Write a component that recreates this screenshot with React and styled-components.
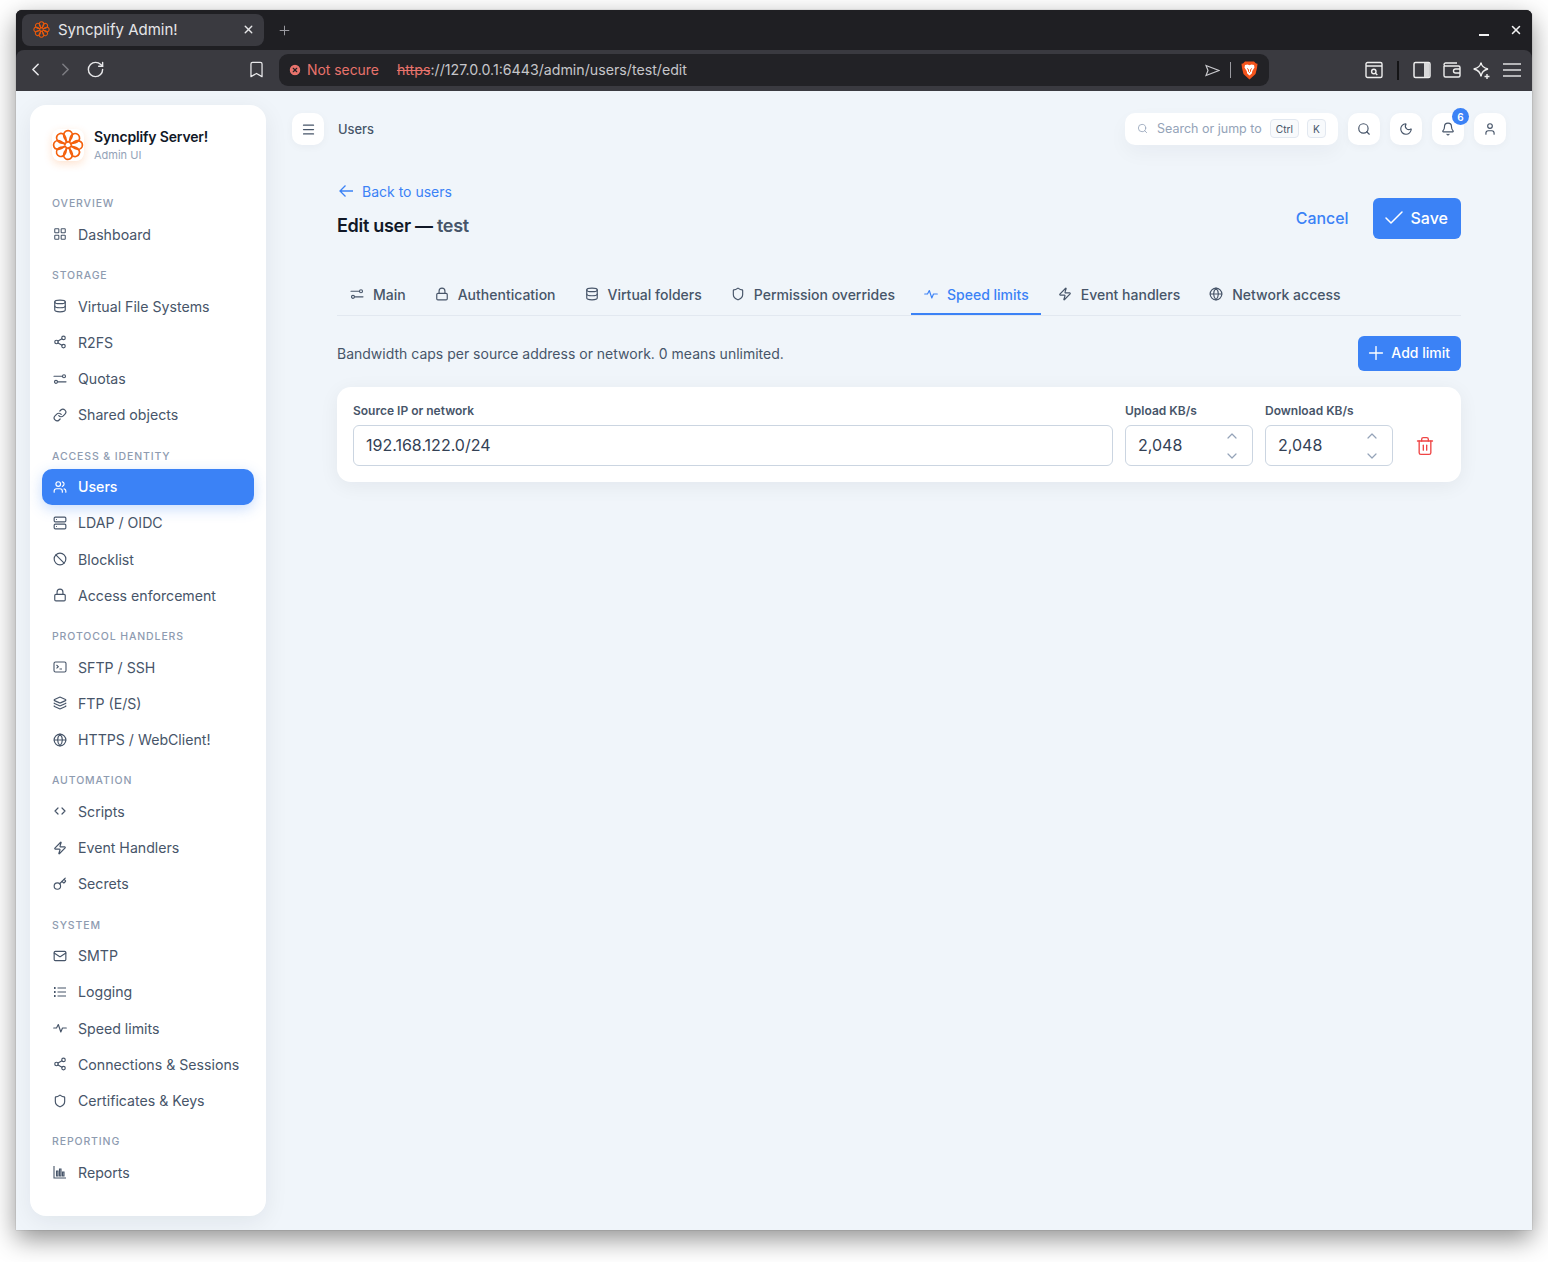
import React from "react";
import styled, { createGlobalStyle } from "styled-components";
import {
  LayoutGrid, Database, Share2, Link, Users, Server, Ban, Lock, Layers, Globe,
  Code, Zap, Key, Mail, Shield, Menu, Search, Moon, Bell, User,
  Check, Plus, ChevronUp, ChevronDown, Trash2, X, ChevronLeft, ChevronRight, RotateCw, Bookmark, CircleX,
} from "lucide-react";

const Global = createGlobalStyle`
  html, body { margin: 0; padding: 0; background: #fff; }
  body { font-family: Inter, "Liberation Sans", sans-serif; -webkit-font-smoothing: antialiased; }
  * { box-sizing: border-box; }
`;

const Page = styled.div`
  width: 1548px;
  height: 1262px;
  padding: 10px 16px 32px;
`;
const Window = styled.div`
  width: 1516px;
  height: 1220px;
  display: flex;
  flex-direction: column;
  border-radius: 6px 6px 0 0;
  overflow: hidden;
  background: #1f1f23;
  box-shadow: 0 9px 26px rgba(0, 0, 0, 0.44), 0 0 1px rgba(0, 0, 0, 0.6);
`;
const TabStrip = styled.div`
  height: 40px;
  flex: none;
  background: #1f1f23;
  display: flex;
  align-items: flex-start;
  padding: 4px 6px 0;
  color: #e8e8ea;
`;
const BrowserTab = styled.div`
  width: 242px;
  height: 32px;
  border-radius: 8px;
  background: #3a3a40;
  display: flex;
  align-items: center;
  padding: 0 9px 1px 11px;
  gap: 8px;
  font-size: 15px;
  color: #e6e6e8;
`;
const TabTitle = styled.span`flex: 1;`;
const NewTab = styled.div`
  margin-left: 13px;
  height: 32px;
  display: flex;
  align-items: center;
  color: #9a9aa0;
`;
const WindowControls = styled.div`
  margin-left: auto;
  height: 32px;
  display: flex;
  align-items: center;
  gap: 20px;
  padding-right: 3px;
  color: #f1f1f3;
`;
const MinimizeBar = styled.span`
  display: block;
  width: 10px;
  height: 2px;
  margin-top: 9px;
  background: #f1f1f3;
`;
const Toolbar = styled.div`
  height: 41px;
  flex: none;
  background: #3a3a40;
  border-radius: 8px 8px 0 0;
  display: flex;
  align-items: center;
  padding: 0 11px 1px 11px;
  color: #e8e8ea;
`;
const NavIcons = styled.div`
  width: 252px;
  display: flex;
  align-items: center;
  gap: 9px;
  margin-left: -2px;
  margin-right: 2px;
  padding-bottom: 1px;
  svg:nth-child(2) { color: #7c7c82; }
  svg:nth-child(3) { margin-left: 1px; }
  svg:nth-child(4) { margin-left: auto; margin-right: 11px; }
`;
const AddressBar = styled.div`
  width: 990px;
  height: 32px;
  border-radius: 9px;
  background: #222226;
  display: flex;
  align-items: center;
  padding: 0 11px 0 9px;
  font-size: 14.2px;
  color: #c6c6ca;
`;
const NotSecure = styled.span`
  color: #e8736c;
  font-size: 13.9px;
  display: flex;
  align-items: center;
  gap: 5px;
  margin-right: 18px;
`;
const UrlText = styled.span`padding-bottom: 2px;`;
const Struck = styled.s`color: #e8736c;`;
const AddressEnd = styled.div`
  margin-left: auto;
  display: flex;
  align-items: center;
  gap: 10px;
`;
const Divider = styled.span`
  display: block;
  width: ${(p) => p.$w || 1}px;
  height: ${(p) => p.$h || 16}px;
  margin: 0 ${(p) => p.$mx || 0}px;
  background: ${(p) => p.$color || "#9b9ba0"};
`;
const BrowserActions = styled.div`
  margin-left: auto;
  display: flex;
  align-items: center;
  gap: 12px;
`;
const Content = styled.div`
  flex: 1;
  min-height: 0;
  display: flex;
  background: #f0f5fa;
`;
const Sidebar = styled.aside`
  flex: none;
  width: 236px;
  margin: 14px 0 14px 14px;
  padding: 24px 12px 0;
  border-radius: 16px;
  background: #fff;
  box-shadow: 0 6px 24px rgba(15, 23, 42, 0.07);
`;
const Brand = styled.div`
  display: flex;
  align-items: center;
  gap: 10px;
  padding-left: 10px;
  height: 32px;
`;
const LogoTile = styled.div`
  width: 32px;
  height: 32px;
  flex: none;
  border-radius: 8px;
  box-shadow: 0 3px 9px rgba(249, 115, 22, 0.2);
  background: #fff;
`;
const BrandName = styled.div`
  font-size: 14px;
  line-height: 18px;
  font-weight: 600;
  letter-spacing: -0.16px;
  color: #111827;
`;
const BrandSub = styled.div`
  font-size: 11px;
  line-height: 14px;
  margin-top: 2px;
  color: #94a3b8;
`;
const SectionLabel = styled.div`
  height: 16px;
  margin: ${(p) => (p.$first ? "35.3px" : "15.5px")} 0 4px;
  padding-left: 10px;
  font-size: 10.5px;
  line-height: 16px;
  font-weight: 500;
  letter-spacing: 0.88px;
  color: #8e9bb0;
`;
const NavItem = styled.div`
  height: 36.25px;
  display: flex;
  align-items: center;
  gap: 11px;
  padding-left: 11px;
  border-radius: 10px;
  font-size: 14.15px;
  color: ${(p) => (p.$active ? "#fff" : "#475569")};
  background: ${(p) => (p.$active ? "#3b82f6" : "transparent")};
  box-shadow: ${(p) => (p.$active ? "0 4px 14px rgba(59, 130, 246, 0.28)" : "none")};
  font-weight: ${(p) => (p.$active ? 500 : 400)};
`;
const IconSlot = styled.span`
  flex: none;
  width: ${(p) => p.$size || 14}px;
  height: ${(p) => p.$size || 14}px;
  display: flex;
  align-items: center;
  justify-content: center;
`;
const Main = styled.main`
  flex: 1;
  min-width: 0;
  padding: 22px 26px 0;
`;
const Topbar = styled.div`
  height: 32px;
  display: flex;
  align-items: center;
`;
const IconButton = styled.div`
  position: relative;
  width: 32px;
  height: 32px;
  flex: none;
  display: flex;
  align-items: center;
  justify-content: center;
  border-radius: 10px;
  background: #fff;
  color: #475569;
  box-shadow: 0 2px 8px rgba(15, 23, 42, 0.04);
`;
const Crumb = styled.div`
  margin-left: 14px;
  font-size: 12.9px;
  font-weight: 500;
  color: #475569;
`;
const TopActions = styled.div`
  margin-left: auto;
  display: flex;
  align-items: center;
  gap: 10px;
`;
const SearchBox = styled.div`
  width: 213px;
  height: 32px;
  display: flex;
  align-items: center;
  padding: 0 10px 1px 12px;
  border-radius: 10px;
  background: #fff;
  color: #94a3b8;
  font-size: 12.5px;
  white-space: nowrap;
  box-shadow: 0 8px 20px rgba(15, 23, 42, 0.04);
`;
const SearchText = styled.span`
  flex: none;
  margin: 0 8px 0 9px;
`;
const Kbd = styled.span`
  flex: none;
  height: 19px;
  padding: 0 5px;
  margin-left: ${(p) => p.$ml || 0}px;
  display: flex;
  align-items: center;
  border: 1px solid #e2e8f0;
  border-radius: 4px;
  background: #f8fafc;
  font-size: 10.2px;
  color: #475569;
`;
const Badge = styled.span`
  position: absolute;
  top: -5px;
  right: -5px;
  width: 17px;
  height: 17px;
  border-radius: 50%;
  background: #3b82f6;
  color: #fff;
  font-size: 10px;
  font-weight: 600;
  display: flex;
  align-items: center;
  justify-content: center;
`;
const Body = styled.div`
  padding: 0 45px;
`;
const HeaderRow = styled.div`
  margin-top: 36px;
  height: 58px;
  display: flex;
  align-items: flex-end;
  justify-content: space-between;
`;
const BackLink = styled.div`
  display: flex;
  align-items: center;
  gap: 8px;
  height: 20px;
  margin-left: 1px;
  font-size: 14px;
  color: #3b82f6;
`;
const Title = styled.h1`
  margin: 13px 0 1px;
  font-size: 18px;
  line-height: 24px;
  font-weight: 600;
  letter-spacing: -0.3px;
  color: #111827;
`;
const TitleMuted = styled.span`color: #475569;`;
const HeaderActions = styled.div`
  display: flex;
  align-items: center;
  gap: 24px;
`;
const Cancel = styled.div`
  font-size: 15.9px;
  font-weight: 500;
  color: #3b82f6;
`;
const PrimaryButton = styled.div`
  height: ${(p) => p.$h}px;
  padding: 0 ${(p) => p.$pr}px ${(p) => p.$pb}px ${(p) => p.$pl}px;
  display: flex;
  align-items: center;
  gap: ${(p) => p.$gap}px;
  border-radius: 6px;
  background: #3b82f6;
  color: #fff;
  font-size: ${(p) => p.$fs}px;
  font-weight: 500;
`;
const Tabs = styled.div`
  margin-top: 36px;
  height: 41px;
  display: flex;
  gap: 4px;
  border-bottom: 1px solid #e2e8f0;
`;
const TabItem = styled.div`
  height: 40px;
  display: flex;
  align-items: center;
  gap: 8px;
  padding: 0 12px;
  font-size: 14px;
  font-weight: 500;
  color: ${(p) => (p.$active ? "#3b82f6" : "#475569")};
  border-bottom: 2px solid ${(p) => (p.$active ? "#3b82f6" : "transparent")};
`;
const DescRow = styled.div`
  margin-top: 20px;
  height: 35px;
  display: flex;
  align-items: center;
  justify-content: space-between;
`;
const Desc = styled.div`
  font-size: 14px;
  color: #475569;
`;
const Card = styled.div`
  margin-top: 16px;
  height: 95px;
  padding: 16px;
  display: flex;
  gap: 12px;
  border-radius: 14px;
  background: #fff;
  box-shadow: 0 4px 20px rgba(15, 23, 42, 0.06);
`;
const Field = styled.div`
  flex: ${(p) => (p.$w ? `0 0 ${p.$w}px` : "1")};
  min-width: 0;
`;
const FieldLabel = styled.div`
  height: 22px;
  font-size: 12px;
  line-height: 15px;
  font-weight: 600;
  color: #475569;
`;
const TextInput = styled.input`
  display: block;
  width: 100%;
  height: 41px;
  padding: 0 12px 1px;
  border: 1px solid #cbd5e1;
  border-radius: 6px;
  background: #fff;
  outline: none;
  font-family: inherit;
  font-size: 16px;
  color: #334155;
`;
const NumberBox = styled.div`
  height: 41px;
  display: flex;
  align-items: center;
  justify-content: space-between;
  padding: 0 12px 1px 12px;
  border: 1px solid #cbd5e1;
  border-radius: 6px;
  font-size: 16px;
  color: #334155;
`;
const Stepper = styled.div`
  display: flex;
  flex-direction: column;
  gap: 4px;
  margin-top: 1px;
  color: #94a3b8;
`;
const TrashCell = styled.div`
  flex: 0 0 40px;
  padding-top: 22px;
  height: 63px;
  display: flex;
  align-items: center;
  justify-content: center;
  color: #ef4444;
`;

const Flower = ({ size = 32, color = "#f4600c", w = 1.7 }) => (
  <svg width={size} height={size} viewBox="0 0 32 32" fill="none" stroke={color} strokeWidth={w}>
    {[0, 45, 90, 135, 180, 225, 270, 315].map((a) => (
      <path key={a} transform={`rotate(${a} 16 16)`} d="M16 13.500C13 11 11.200 8 11.800 5C12.400 2 15.500 0.900 18 2C20.500 3.200 20.800 6.500 19.600 9C18.600 11 17.300 12.300 16 13.500" />
    ))}
  </svg>
);

const Lion = () => (
  <svg width="17" height="19" viewBox="0 0 17 19">
    <path d="M4 0.500H13L15 2.500L16.500 2.800L16 7L14.500 13L8.500 18.500L2.500 13L1 7L0.500 2.800L2 2.500Z" fill="#f4541c" />
    <path d="M4 4L6.500 3.500L8.500 4.200L10.500 3.500L13 4L13.500 6.500L11.300 10L10.800 12.500L8.500 14.500L6.200 12.500L5.700 10L3.500 6.500Z" fill="#fff" />
    <path d="M6 7.500L7.500 8.500L7.500 10.500L8.500 11.500L9.500 10.500L9.500 8.500L11 7.500" stroke="#f4541c" strokeWidth="1" fill="none" />
  </svg>
);

const BarsIcon = () => (
  <svg width="14" height="14" viewBox="0 0 14 14" fill="none" stroke="currentColor" strokeWidth="1.100">
    <path d="M1 1v12h12" />
    <path d="M3.500 6h1.500v5h-1.500zM6.500 4h1.500v7h-1.500zM9.500 7h1.500v4h-1.500z" fill="currentColor" fillOpacity=".35" />
  </svg>
);
const PulseIcon = () => (
  <svg width="14" height="14" viewBox="0 0 14 14" fill="none" stroke="currentColor" strokeWidth="1.150" strokeLinejoin="round" strokeLinecap="round">
    <path d="M0.700 7H3.500L5.300 3.500L7.800 11L9.500 7H13.300" />
  </svg>
);
const ListIcon = () => (
  <svg width="14" height="14" viewBox="0 0 14 14" fill="none" stroke="currentColor" strokeWidth="1.100">
    <path d="M4.500 3H13M4.500 7H13M4.500 11H13" />
    <path d="M1 3h1.600M1 7h1.600M1 11h1.600" strokeWidth="1.900" />
  </svg>
);
const SlidersIcon = () => (
  <svg width="14" height="14" viewBox="0 0 14 14" fill="none" stroke="currentColor" strokeWidth="1.150" strokeLinecap="round">
    <path d="M1 4.200h8.400M4.800 9.800H13" />
    <circle cx="11" cy="4.200" r="1.500" />
    <circle cx="3" cy="9.800" r="1.500" />
  </svg>
);
const TerminalIcon = () => (
  <svg width="14" height="14" viewBox="0 0 14 14" fill="none" stroke="currentColor" strokeWidth="1.100">
    <rect x="1" y="2" width="12" height="10" rx="1.500" />
    <path d="M3.500 5l1.800 1.700l-1.800 1.700M6.500 9h2.500" />
  </svg>
);
const GridIcon = (p) => <LayoutGrid {...p} size={16} strokeWidth={1.8} />;
const ArrowBack = () => (
  <svg width="16" height="14" viewBox="0 0 16 14" fill="none" stroke="currentColor" strokeWidth="1.300">
    <path d="M15 7H2M7.500 1.500L2 7l5.500 5.500" />
  </svg>
);
const ScriptsIcon = (p) => <Code {...p} size={12} strokeWidth={2.4} />;

const ic = { size: 14, strokeWidth: 2 };
const sections = [
  { label: "OVERVIEW", items: [["Dashboard", GridIcon]] },
  { label: "STORAGE", items: [["Virtual File Systems", Database], ["R2FS", Share2], ["Quotas", SlidersIcon], ["Shared objects", Link]] },
  { label: "ACCESS & IDENTITY", items: [["Users", Users, true], ["LDAP / OIDC", Server], ["Blocklist", Ban], ["Access enforcement", Lock]] },
  { label: "PROTOCOL HANDLERS", items: [["SFTP / SSH", TerminalIcon], ["FTP (E/S)", Layers], ["HTTPS / WebClient!", Globe]] },
  { label: "AUTOMATION", items: [["Scripts", ScriptsIcon], ["Event Handlers", Zap], ["Secrets", Key]] },
  { label: "SYSTEM", items: [["SMTP", Mail], ["Logging", ListIcon], ["Speed limits", PulseIcon], ["Connections & Sessions", Share2], ["Certificates & Keys", Shield]] },
  { label: "REPORTING", items: [["Reports", BarsIcon]] },
];
const tabs = [
  ["Main", SlidersIcon], ["Authentication", Lock], ["Virtual folders", Database], ["Permission overrides", Shield],
  ["Speed limits", PulseIcon, true], ["Event handlers", Zap], ["Network access", Globe],
];

const PanelIcon = () => (
  <svg width="18" height="18" viewBox="0 0 18 18" fill="none" stroke="#eee" strokeWidth="1.500">
    <rect x="1" y="1.500" width="16" height="15" rx="1.500" /><rect x="11" y="2" width="5.500" height="14" fill="#d8d8da" stroke="none" />
  </svg>
);
const WalletIcon = () => (
  <svg width="18" height="18" viewBox="0 0 18 18" fill="none" stroke="#eee" strokeWidth="1.400">
    <path d="M1 5V14.500a1.500 1.500 0 0 0 1.500 1.500h13a1.500 1.500 0 0 0 1.500 -1.500V6.500A1.500 1.500 0 0 0 15.500 5H2.500A1.500 1.500 0 0 1 1 3.800C1 3 1.600 2 2.500 2H14" />
    <path d="M17 8h-4.500a2 2 0 0 0 0 4H17" />
  </svg>
);
const SparkIcon = () => (
  <svg width="18" height="19" viewBox="0 0 18 19" fill="none" stroke="#eee" strokeWidth="1.400">
    <path d="M8 1.500C8.500 5 10.500 7 15 8C10.500 9 8.500 11.500 8 15.500C7.500 11.500 5 9 0.700 8C5 7 7.500 5 8 1.500Z" />
    <path d="M14 13v5M11.500 15.500h5" />
  </svg>
);
const CaptureIcon = () => (
  <svg width="18" height="18" viewBox="0 0 18 18" fill="none" stroke="#eee" strokeWidth="1.400">
    <rect x="1" y="1.500" width="16" height="15" rx="1.500" /><path d="M1 5h16" /><circle cx="8.800" cy="10.500" r="2.200" /><path d="M10.500 12.200l1.800 1.800" />
  </svg>
);
const SendIcon = () => (
  <svg width="15" height="13" viewBox="0 0 15 13" fill="none" stroke="#c8c8cc" strokeWidth="1.200">
    <path d="M1 1.500L14 6.500L1 11.500L3 6.500Z" />
  </svg>
);
const BurgerIcon = () => (
  <svg width="18" height="14" viewBox="0 0 18 14" stroke="#dedee0" strokeWidth="1.700">
    <path d="M0 1h18M0 7h18M0 13h18" />
  </svg>
);

export default function App() {
  return (
    <Page>
      <Global />
      <Window>
        <TabStrip>
          <BrowserTab>
            <Flower size={17} w={2} color="#e8590c" />
            <TabTitle>Syncplify Admin!</TabTitle>
            <X size={13} strokeWidth={2.5} />
          </BrowserTab>
          <NewTab><Plus size={15} strokeWidth={1.6} /></NewTab>
          <WindowControls>
            <MinimizeBar />
            <X size={14} strokeWidth={2.6} />
          </WindowControls>
        </TabStrip>
        <Toolbar>
          <NavIcons>
            <ChevronLeft size={21} strokeWidth={1.8} />
            <ChevronRight size={21} strokeWidth={1.8} />
            <RotateCw size={19} strokeWidth={1.8} />
            <Bookmark size={19} strokeWidth={1.6} />
          </NavIcons>
          <AddressBar>
            <NotSecure><CircleX size={14} fill="#e8736c" color="#222226" strokeWidth={2} />Not secure</NotSecure>
            <UrlText><Struck>https</Struck>://127.0.0.1:6443/admin/users/test/edit</UrlText>
            <AddressEnd>
              <SendIcon />
              <Divider />
              <Lion />
            </AddressEnd>
          </AddressBar>
          <BrowserActions>
            <CaptureIcon />
            <Divider $color="#141416" $w={2} $h={19} $mx={2} />
            <PanelIcon />
            <WalletIcon />
            <SparkIcon />
            <BurgerIcon />
          </BrowserActions>
        </Toolbar>
        <Content>
          <Sidebar>
            <Brand>
              <LogoTile><Flower /></LogoTile>
              <div>
                <BrandName>Syncplify Server!</BrandName>
                <BrandSub>Admin UI</BrandSub>
              </div>
            </Brand>
            {sections.map((s, i) => (
              <React.Fragment key={s.label}>
                <SectionLabel $first={i === 0}>{s.label}</SectionLabel>
                {s.items.map(([name, Icon, active]) => (
                  <NavItem key={name} $active={active}>
                    <IconSlot><Icon {...ic} /></IconSlot>
                    {name}
                  </NavItem>
                ))}
              </React.Fragment>
            ))}
          </Sidebar>
          <Main>
            <Topbar>
              <IconButton><Menu size={15} strokeWidth={2} /></IconButton>
              <Crumb>Users</Crumb>
              <TopActions>
                <SearchBox>
                  <Search size={11} strokeWidth={1.8} />
                  <SearchText>Search or jump to</SearchText>
                  <Kbd>Ctrl</Kbd>
                  <Kbd $ml={8}>K</Kbd>
                </SearchBox>
                <IconButton><Search size={14} strokeWidth={2} /></IconButton>
                <IconButton><Moon size={14} strokeWidth={2} /></IconButton>
                <IconButton><Bell size={14} strokeWidth={2} /><Badge>6</Badge></IconButton>
                <IconButton><User size={14} strokeWidth={2} /></IconButton>
              </TopActions>
            </Topbar>
            <Body>
              <HeaderRow>
                <div>
                  <BackLink><ArrowBack />Back to users</BackLink>
                  <Title>Edit user — <TitleMuted>test</TitleMuted></Title>
                </div>
                <HeaderActions>
                  <Cancel>Cancel</Cancel>
                  <PrimaryButton $h={41} $pl={9} $pr={13} $pb={1} $gap={5} $fs={16}><Check size={24} strokeWidth={1.5} />Save</PrimaryButton>
                </HeaderActions>
              </HeaderRow>
              <Tabs>
                {tabs.map(([name, Icon, active]) => (
                  <TabItem key={name} $active={active}>
                    <IconSlot $size={16}><Icon size={14} strokeWidth={2} /></IconSlot>
                    {name}
                  </TabItem>
                ))}
              </Tabs>
              <DescRow>
                <Desc>Bandwidth caps per source address or network. 0 means unlimited.</Desc>
                <PrimaryButton $h={35} $pl={7} $pr={11} $pb={2} $gap={4} $fs={14}><Plus size={22} strokeWidth={1.5} />Add limit</PrimaryButton>
              </DescRow>
              <Card>
                <Field>
                  <FieldLabel>Source IP or network</FieldLabel>
                  <TextInput defaultValue="192.168.122.0/24" />
                </Field>
                <Field $w={128}>
                  <FieldLabel>Upload KB/s</FieldLabel>
                  <NumberBox>2,048<Stepper><ChevronUp size={16} strokeWidth={1.8} /><ChevronDown size={16} strokeWidth={1.8} /></Stepper></NumberBox>
                </Field>
                <Field $w={128}>
                  <FieldLabel>Download KB/s</FieldLabel>
                  <NumberBox>2,048<Stepper><ChevronUp size={16} strokeWidth={1.8} /><ChevronDown size={16} strokeWidth={1.8} /></Stepper></NumberBox>
                </Field>
                <TrashCell><Trash2 size={20} strokeWidth={1.6} /></TrashCell>
              </Card>
            </Body>
          </Main>
        </Content>
      </Window>
    </Page>
  );
}
